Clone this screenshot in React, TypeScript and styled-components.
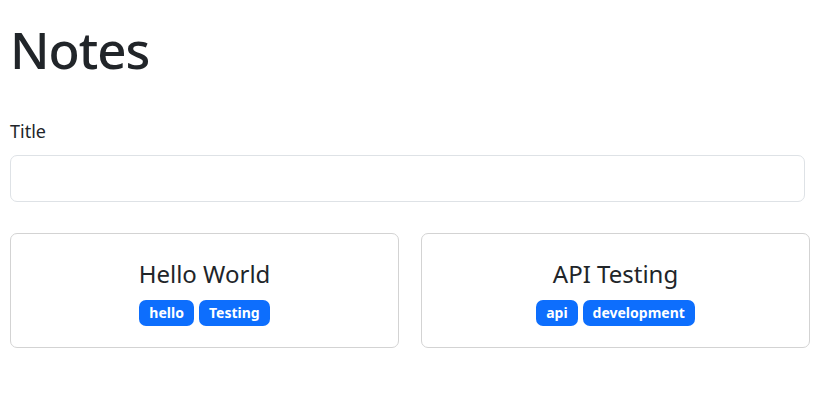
import styled, { createGlobalStyle } from 'styled-components';

const GlobalStyle = createGlobalStyle`
  * {
    box-sizing: border-box;
  }

  body {
    margin: 0;
    background-color: #fff;
    color: #212529;
    font-family: 'Noto Sans', 'Open Sans', sans-serif;
  }
`;

type Note = {
  id: number;
  title: string;
  tags: string[];
};

const notes: Note[] = [
  { id: 1, title: 'Hello World', tags: ['hello', 'Testing'] },
  { id: 2, title: 'API Testing', tags: ['api', 'development'] },
];

const App = () => {
  return (
    <>
      <GlobalStyle />
      <Container>
        <Heading>Notes</Heading>
        <Form>
          <Label htmlFor='title'>Title</Label>
          <Input id='title' type='text' />
        </Form>
        <Grid>
          {notes.map(note => (
            <Card key={note.id}>
              <CardTitle>{note.title}</CardTitle>
              <Tags>
                {note.tags.map(tag => (
                  <Badge key={tag}>{tag}</Badge>
                ))}
              </Tags>
            </Card>
          ))}
        </Grid>
      </Container>
    </>
  );
};

const Container = styled.div`
  width: 813px;
  padding: 19px 0 0 10px;
`;

const Heading = styled.h1`
  margin: 0 0 38px;
  font-size: 51px;
  font-weight: 500;
  line-height: 1.2;
  letter-spacing: -1px;
`;

const Form = styled.div`
  width: 795px;
  display: flex;
  flex-direction: column;
`;

const Label = styled.label`
  font-size: 18px;
  line-height: 1.5;
  margin-bottom: 10px;
`;

const Input = styled.input`
  height: 47px;
  width: 100%;
  padding: 7px 14px;
  border: 1px solid #dee2e6;
  border-radius: 7px;
  font-size: 19px;
  outline: none;
`;

const Grid = styled.div`
  margin-top: 31px;
  display: grid;
  grid-template-columns: 389px 389px;
  column-gap: 22px;
`;

const Card = styled.div`
  height: 115px;
  border: 1px solid #d3d3d3;
  border-radius: 7px;
  padding: 26px 16px;
  display: flex;
  flex-direction: column;
  align-items: center;
`;

const CardTitle = styled.h4`
  margin: 0 0 11px;
  font-size: 24px;
  font-weight: 400;
  line-height: 1.2;
`;

const Tags = styled.div`
  display: flex;
  gap: 5px;
`;

const Badge = styled.span`
  display: inline-flex;
  align-items: center;
  height: 26px;
  background-color: #0d6efd;
  color: #fff;
  font-size: 14px;
  font-weight: 700;
  line-height: 1;
  padding: 0 10px;
  border-radius: 7px;
`;

export default App;
